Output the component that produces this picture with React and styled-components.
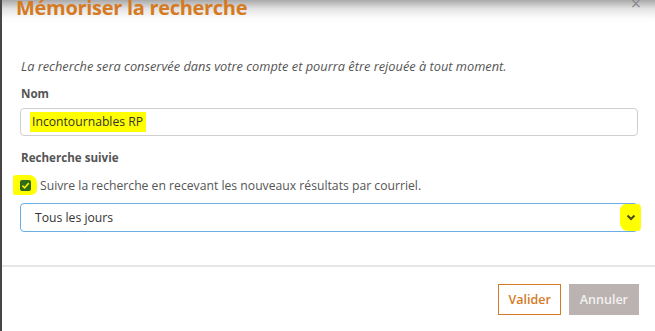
import styled, { createGlobalStyle } from "styled-components";

const GlobalStyle = createGlobalStyle`
  html, body {
    margin: 0;
    padding: 0;
    background: #3d3d3d;
  }
  body {
    font-family: "Open Sans", "Liberation Sans", sans-serif;
  }
`;

const Page = styled.div`
  display: flex;
  width: 655px;
  height: 331px;
  overflow: hidden;
`;

const Edge = styled.div`
  width: 2px;
  background: #4a4545;
`;

const Modal = styled.div`
  flex: 1;
  display: flex;
  flex-direction: column;
  background: #fff;
`;

const Header = styled.div`
  height: 34px;
  padding: 0 14px;
  display: flex;
  align-items: flex-start;
  justify-content: space-between;
  overflow: hidden;
  background: linear-gradient(#a9a9a9 0px, #e4e4e4 9px, #fbfbfb 18px, #fff 24px);
`;

const Title = styled.h2`
  margin: -6px 0 0;
  font-size: 20px;
  line-height: 28px;
  font-weight: 700;
  color: #d57a22;
  letter-spacing: -0.3px;
`;

const Close = styled.span`
  margin-top: -6px;
  font-size: 18px;
  line-height: 18px;
  color: #8a8a8a;
`;

const Body = styled.div`
  padding: 24px 17px 0 16px;
  display: flex;
  flex-direction: column;
`;

const Intro = styled.p`
  margin: 0 0 0 3px;
  font-size: 12.8px;
  line-height: 16px;
  font-style: italic;
  color: #555;
`;

const Label = styled.div`
  margin: ${p => p.top}px 0 ${p => p.bottom}px 3px;
  font-size: 11.6px;
  line-height: 16px;
  font-weight: 700;
  color: #555;
`;

const Field = styled.div`
  box-sizing: border-box;
  height: ${p => p.h}px;
  margin-left: 2px;
  display: flex;
  align-items: center;
  justify-content: space-between;
  padding: 0 0 0 ${p => p.pad}px;
  border: 1px solid ${p => (p.focus ? "#6aaee3" : "#cfcfcf")};
  border-radius: 4px;
  font-size: 12.2px;
  color: #333;
`;

const Marked = styled.span`
  background: #ffff00;
  padding: 1px 3px 2px 2px;
`;

const CheckRow = styled.label`
  display: flex;
  align-items: center;
  gap: 3px;
  margin: 0 0 8px -5px;
  font-size: 12.2px;
  color: #555;
`;

const Blob = styled.span`
  display: flex;
  align-items: center;
  justify-content: center;
  flex-shrink: 0;
  width: ${p => p.w}px;
  height: ${p => p.h}px;
  margin-right: ${p => p.mr || 0}px;
  background: #ffff00;
  border-radius: ${p => p.r};
`;

const Box = styled.span`
  width: 11px;
  height: 11px;
  border-radius: 2px;
  background: #2f6a1c;
  display: flex;
  align-items: center;
  justify-content: center;
`;

const Footer = styled.div`
  margin-top: auto;
  height: 64px;
  border-top: 2px solid #e6e6e6;
  display: flex;
  align-items: center;
  justify-content: flex-end;
  gap: 8px;
  padding: 0 16px 0 0;
`;

const Button = styled.button`
  height: 31px;
  padding: 0 ${p => p.pad}px;
  font-family: inherit;
  font-size: 12.5px;
  font-weight: 600;
  border: 1px solid ${p => (p.primary ? "#d57a22" : "#bab3b1")};
  background: ${p => (p.primary ? "#fff" : "#bab3b1")};
  color: ${p => (p.primary ? "#d57a22" : "#f4f1f0")};
`;

export default function App() {
  return (
    <Page>
      <GlobalStyle />
      <Edge />
      <Modal>
        <Header>
          <Title>Mémoriser la recherche</Title>
          <Close>×</Close>
        </Header>
        <Body>
          <Intro>
            La recherche sera conservée dans votre compte et pourra être rejouée à tout moment.
          </Intro>
          <Label top={12} bottom={6}>Nom</Label>
          <Field h={28} pad={9}>
            <Marked>Incontournables RP</Marked>
          </Field>
          <Label top={14} bottom={9}>Recherche suivie</Label>
          <CheckRow>
            <Blob w={24} h={20} r="3px 8px 6px 2px">
              <Box>
                <svg width="9" height="9" viewBox="0 0 10 10">
                  <path d="M1.5 5.2 L4 7.6 L8.6 2.4" fill="none" stroke="#f2f000" strokeWidth="1.8" />
                </svg>
              </Box>
            </Blob>
            Suivre la recherche en recevant les nouveaux résultats par courriel.
          </CheckRow>
          <Field h={29} pad={14} focus>
            <span>Tous les jours</span>
            <Blob w={21} h={27} mr={-4} r="6px 4px 4px 8px">
              <svg width="10" height="7" viewBox="0 0 10 7">
                <path d="M1.5 1.5 L5 5 L8.5 1.5" fill="none" stroke="#4a4a1a" strokeWidth="2" />
              </svg>
            </Blob>
          </Field>
        </Body>
        <Footer>
          <Button primary pad={9}>Valider</Button>
          <Button pad={10}>Annuler</Button>
        </Footer>
      </Modal>
    </Page>
  );
}
